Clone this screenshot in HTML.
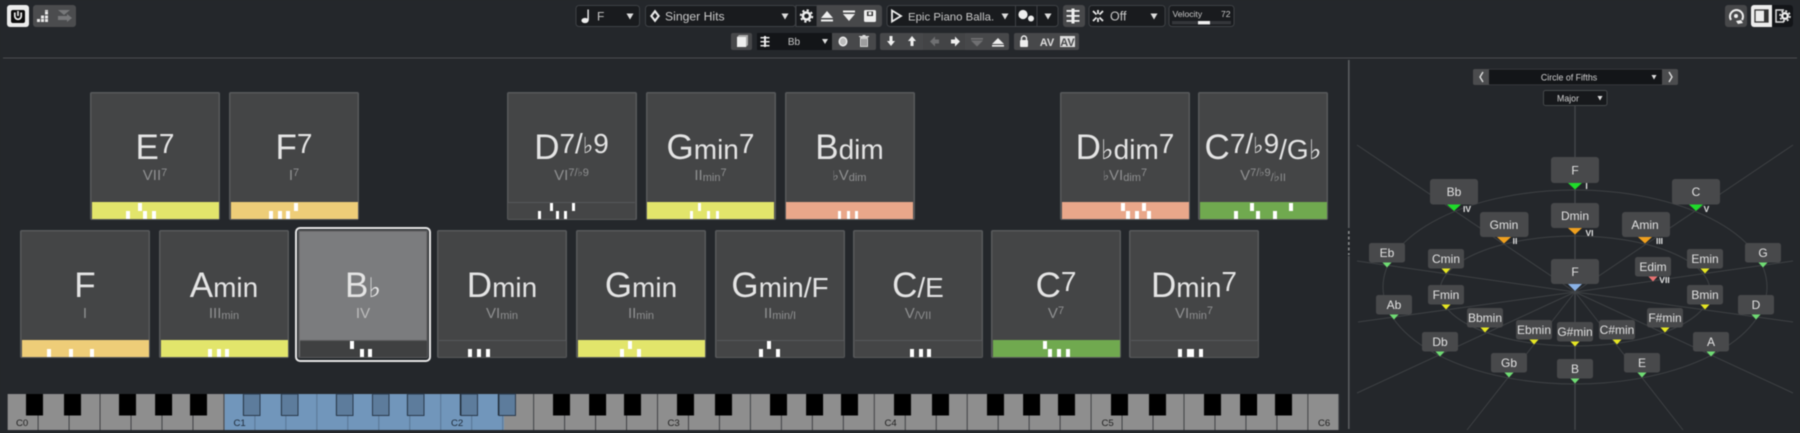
<!DOCTYPE html>
<html><head><meta charset="utf-8"><title>Chord Pads</title>
<style>
html,body{margin:0;padding:0;width:1800px;height:433px;overflow:hidden;background:#24272b;font-family:"Liberation Sans",sans-serif}
#w{position:absolute;left:0;top:0;width:1800px;height:433px;background:#24272b;overflow:hidden;filter:blur(.4px)}
svg.o{position:absolute;left:0;top:0}
svg text{font-family:"Liberation Sans",sans-serif}
.c{position:absolute;width:130px;height:128px;background:#444546;border-radius:2px;box-shadow:inset 0 0 0 1.5px #58595b}
.t{top:92px}.r{top:230px}
.m{position:absolute;left:0;right:0;top:36px;line-height:40px;font-size:35px;text-align:center;color:#e4e4e4;white-space:nowrap}
.m b{font-weight:400;font-size:28px}
.m u{text-decoration:none;font-size:28px;position:relative;top:-6px}
.m s{text-decoration:none;font-size:27px;font-family:"DejaVu Sans",sans-serif}
.m u s{font-size:22px}
.s{position:absolute;left:0;right:0;top:75px;line-height:18px;font-size:15px;text-align:center;color:#8f9091;white-space:nowrap}
.s b{font-weight:400;font-size:11px;position:relative;top:1px}
.s u{text-decoration:none;font-size:11px;position:relative;top:-4px}
.s s{text-decoration:none;font-size:13px;font-family:"DejaVu Sans",sans-serif}
.s u s{font-size:11px}
.b{position:absolute;left:1.5px;right:1.5px;top:110px;height:16.5px;background:#444546;border-top:1px solid #56585a;box-sizing:border-box}
.y{background:#e2e56b;border:0}.g{background:#eecd78;border:0}.p{background:#e9a78a;border:0}.n{background:#70a94f;border:0}
.c i{position:absolute;top:119px;width:3.5px;height:8px;background:#fff}
.c i.u{top:111px}
.sel{position:absolute;left:295px;top:227px;width:136px;height:135px;box-sizing:border-box;border:2px solid #e6e6e6;border-radius:5px}
</style></head><body><div id="w">

<div class="c t" style="left:90px"><div class="m">E<u>7</u></div><div class="s">VII<u>7</u></div><div class="b y"></div><i style="left:36px"></i><i class="u" style="left:48px"></i><i style="left:53px"></i><i style="left:62px"></i></div>
<div class="c t" style="left:229px"><div class="m">F<u>7</u></div><div class="s">I<u>7</u></div><div class="b g"></div><i style="left:40px"></i><i style="left:49px"></i><i style="left:57px"></i><i class="u" style="left:65px"></i></div>
<div class="c t" style="left:506.500px"><div class="m">D<u>7/<s>♭</s>9</u></div><div class="s">VI<u>7/<s>♭</s>9</u></div><div class="b"></div><i style="left:31px"></i><i class="u" style="left:43px"></i><i style="left:49px"></i><i style="left:57px"></i><i class="u" style="left:65px"></i></div>
<div class="c t" style="left:645.500px"><div class="m">G<b>min</b><u>7</u></div><div class="s">II<b>min</b><u>7</u></div><div class="b y"></div><i style="left:44px"></i><i class="u" style="left:52px"></i><i style="left:61px"></i><i style="left:70px"></i></div>
<div class="c t" style="left:784.500px"><div class="m">B<b>dim</b></div><div class="s"><s>♭</s>V<b>dim</b></div><div class="b p"></div><i style="left:53px"></i><i style="left:62px"></i><i style="left:70px"></i></div>
<div class="c t" style="left:1060px"><div class="m">D<s>♭</s><b>dim</b><u>7</u></div><div class="s"><s>♭</s>VI<b>dim</b><u>7</u></div><div class="b p"></div><i class="u" style="left:61px"></i><i style="left:66px"></i><i style="left:75px"></i><i class="u" style="left:82px"></i><i style="left:87px"></i></div>
<div class="c t" style="left:1198px"><div class="m">C<u>7/<s>♭</s>9</u><b>/G</b><s>♭</s></div><div class="s">V<u>7/<s>♭</s>9</u><b>/<s>♭</s>II</b></div><div class="b n"></div><i style="left:36px"></i><i class="u" style="left:52px"></i><i style="left:58px"></i><i style="left:75px"></i><i class="u" style="left:91px"></i></div>

<div class="c r" style="left:20px"><div class="m">F</div><div class="s">I</div><div class="b g"></div><i style="left:27px"></i><i style="left:49px"></i><i style="left:70px"></i></div>
<div class="c r" style="left:159px"><div class="m">A<b>min</b></div><div class="s">III<b>min</b></div><div class="b y"></div><i style="left:49px"></i><i style="left:58px"></i><i style="left:66px"></i></div>
<div class="c r" style="left:298px;background:#7b7c7e"><div class="m">B<s>♭</s></div><div class="s" style="color:#bdbdbd">IV</div><div class="b" style="background:#3f4041;border-top-color:#5a5b5c"></div><i class="u" style="left:52px"></i><i style="left:62px"></i><i style="left:70px"></i></div>
<div class="sel"></div>
<div class="c r" style="left:437px"><div class="m">D<b>min</b></div><div class="s">VI<b>min</b></div><div class="b"></div><i style="left:31px"></i><i style="left:40px"></i><i style="left:49px"></i></div>
<div class="c r" style="left:576px"><div class="m">G<b>min</b></div><div class="s">II<b>min</b></div><div class="b y"></div><i style="left:44px"></i><i class="u" style="left:52px"></i><i style="left:61px"></i></div>
<div class="c r" style="left:715px"><div class="m">G<b>min/F</b></div><div class="s">II<b>min/I</b></div><div class="b"></div><i style="left:44px"></i><i class="u" style="left:52px"></i><i style="left:61px"></i></div>
<div class="c r" style="left:853px"><div class="m">C<b>/E</b></div><div class="s">V<b>/VII</b></div><div class="b"></div><i style="left:57px"></i><i style="left:66px"></i><i style="left:74px"></i></div>
<div class="c r" style="left:991px"><div class="m">C<u>7</u></div><div class="s">V<u>7</u></div><div class="b n"></div><i class="u" style="left:52px"></i><i style="left:57px"></i><i style="left:66px"></i><i style="left:75px"></i></div>
<div class="c r" style="left:1129px"><div class="m">D<b>min</b><u>7</u></div><div class="s">VI<b>min</b><u>7</u></div><div class="b"></div><i style="left:49px"></i><i style="left:58px"></i><i style="left:61px"></i><i style="left:70px"></i></div>

<svg class="o" width="1800" height="433" viewBox="0 0 1800 433" xmlns="http://www.w3.org/2000/svg">
<defs>
<pattern id="wk" x="7.6" y="394" width="30.97" height="36" patternUnits="userSpaceOnUse"><rect width="30.97" height="36" fill="#8e8e8e"/><rect x="30.1" width=".9" height="36" fill="#35363a"/></pattern>
<pattern id="wb" x="7.6" y="394" width="30.97" height="36" patternUnits="userSpaceOnUse"><rect width="30.97" height="36" fill="#7196bb"/><rect x="30.1" width=".9" height="36" fill="#54708e"/></pattern>
<pattern id="bk" x="7.6" y="394" width="217" height="22" patternUnits="userSpaceOnUse"><rect x="18.4" width="17" height="21.5" fill="#000"/><rect x="56.4" width="17" height="21.5" fill="#000"/><rect x="111.4" width="17" height="21.5" fill="#000"/><rect x="147.5" width="17" height="21.5" fill="#000"/><rect x="182.4" width="17" height="21.5" fill="#000"/></pattern>
</defs>

<!-- dividers -->
<rect x="3" y="57.5" width="1794" height="1" fill="#4a4d50"/>
<rect x="1348" y="60" width="1.6" height="168" fill="#5a5d60"/>
<line x1="1348.8" y1="231" x2="1348.8" y2="255" stroke="#8a8c8e" stroke-width="1.6" stroke-dasharray="3 2.5"/>
<rect x="1348" y="256" width="1.6" height="173" fill="#5a5d60"/>

<!-- top-left -->
<rect x="7" y="5" width="22" height="22" rx="3" fill="#ececec"/>
<rect x="11" y="10" width="14" height="13" rx="2" fill="#0b0b0b"/>
<path d="M14.8 12.5v3.6a3.2 3.2 0 0 0 6.4 0v-3.6" fill="none" stroke="#eee" stroke-width="1.7"/><rect x="17.2" y="11" width="1.6" height="5" fill="#eee"/>
<rect x="33" y="5" width="43" height="22" rx="3" fill="#4b4c4e"/>
<g fill="#e8e8e8"><rect x="37" y="19" width="3" height="3"/><rect x="41" y="19" width="3" height="3"/><rect x="45" y="19" width="3" height="3"/><rect x="41" y="15.5" width="3" height="3"/><rect x="45" y="15.5" width="3" height="3"/><rect x="45" y="11.5" width="3" height="3"/><rect x="45" y="10" width="3" height="1.2"/></g>
<path d="M58 10h12l-6 5z M58 16h9v-2l5 4-5 4v-2h-9z" fill="#77787a"/>

<!-- note box -->
<rect x="576" y="5.5" width="63.5" height="21" rx="3" fill="#191b1e" stroke="#3e4145"/>
<ellipse cx="585" cy="20.5" rx="3.6" ry="2.6" fill="#eee"/><rect x="587.4" y="9.5" width="1.4" height="11" fill="#eee"/>
<text x="597" y="20.5" font-size="12" fill="#c9c9c9">F</text>
<path d="M626.5 13.5h7l-3.5 6z" fill="#ddd"/>
<!-- singer hits -->
<rect x="645.5" y="5.5" width="150" height="21" rx="3" fill="#191b1e" stroke="#3e4145"/>
<path d="M655 9.5l5 6.5-5 6.5-5-6.5z" fill="#e8e8e8"/><path d="M655 13l2.4 3-2.4 3-2.4-3z" fill="#191b1e"/>
<text x="665" y="20.5" font-size="12.2" fill="#c9c9c9">Singer Hits</text>
<path d="M781.5 13.5h7l-3.5 6z" fill="#ddd"/>
<rect x="796" y="5.5" width="21" height="21" fill="#191b1e" stroke="#3e4145"/>
<circle cx="806.5" cy="16" r="3.6" fill="none" stroke="#eee" stroke-width="2.6"/><circle cx="806.5" cy="16" r="5.8" fill="none" stroke="#eee" stroke-width="1.8" stroke-dasharray="2.2 2.35"/>
<path d="M817 5h62a3 3 0 0 1 3 3v16a3 3 0 0 1-3 3h-62z" fill="#47484a"/>
<path d="M821 18l6-7 6 7z M821 19.5h12v2h-12z" fill="#eee"/>
<path d="M843 14l6 7 6-7z M843 10.5h12v2h-12z" fill="#eee"/>
<rect x="864" y="10" width="12" height="12" rx="1.5" fill="#eee"/><rect x="867" y="11.5" width="6" height="4.5" fill="#333"/><rect x="868.5" y="12" width="3" height="3" fill="#eee"/>
<!-- epic -->
<rect x="887" y="5.5" width="171" height="21" rx="3" fill="#191b1e" stroke="#3e4145"/>
<line x1="1015.5" y1="5.5" x2="1015.5" y2="26.5" stroke="#3e4145"/><line x1="1037" y1="5.5" x2="1037" y2="26.5" stroke="#3e4145"/>
<path d="M892 10.5l9 5.5-9 5.5z" fill="none" stroke="#eee" stroke-width="1.8"/>
<text x="908" y="20.5" font-size="11.4" fill="#c9c9c9">Epic Piano Balla.</text>
<path d="M1001.5 13.5h7l-3.5 6z" fill="#ddd"/>
<circle cx="1023" cy="14.5" r="4.6" fill="#eee"/><circle cx="1031" cy="18.5" r="3" fill="#eee"/>
<path d="M1044.5 13.5h7l-3.5 6z" fill="#ddd"/>
<rect x="1063" y="5" width="22" height="22" rx="3" fill="#47484a"/>
<g fill="#eee"><rect x="1066.5" y="10" width="13" height="1.8"/><rect x="1066.5" y="15" width="13" height="1.8"/><rect x="1066.5" y="20" width="13" height="1.8"/><rect x="1071.5" y="8.5" width="3" height="15"/></g>
<!-- off -->
<rect x="1089" y="5.5" width="76" height="21" rx="3" fill="#191b1e" stroke="#3e4145"/>
<g stroke="#eee" stroke-width="1.7" fill="none"><path d="M1093 11l3.500 3.500M1103 11l-3.500 3.500M1093 21l3.500-3.500M1103 21l-3.500-3.500"/><path d="M1098 10v4M1098 18v4"/></g>
<text x="1110" y="20.5" font-size="12.5" fill="#c9c9c9">Off</text>
<path d="M1150.5 13.5h7l-3.5 6z" fill="#ddd"/>
<!-- velocity -->
<rect x="1169" y="5.5" width="65" height="21" rx="3" fill="#191b1e" stroke="#3e4145"/>
<text x="1172.5" y="17" font-size="8.6" fill="#c9c9c9">Velocity</text><text x="1230.5" y="17" font-size="8.6" fill="#c9c9c9" text-anchor="end">72</text>
<rect x="1172" y="21" width="59" height="3.4" fill="#34363a"/><rect x="1198" y="21" width="12" height="3.4" fill="#f0f0f0"/>

<!-- row 2 -->
<rect x="731" y="33" width="21" height="17" rx="2" fill="#47484a"/>
<path d="M737 37l2-2h9v10l-2 2" fill="#aaa"/><rect x="737" y="37" width="9" height="10" fill="#eee"/>
<rect x="757" y="33" width="75" height="17" fill="#131518"/>
<g fill="#eee"><rect x="760.5" y="37" width="9" height="1.4"/><rect x="760.5" y="41" width="9" height="1.4"/><rect x="760.5" y="45" width="9" height="1.4"/><rect x="764" y="36" width="2" height="11"/></g>
<text x="794" y="45" font-size="10" fill="#c9c9c9" text-anchor="middle">Bb</text>
<path d="M822 39h6l-3 5z" fill="#ddd"/>
<path d="M832 33h42a2 2 0 0 1 2 2v13a2 2 0 0 1-2 2h-42z" fill="#47484a"/>
<ellipse cx="843" cy="41.5" rx="4.5" ry="5" fill="#eee"/><ellipse cx="843" cy="41.5" rx="3" ry="3.5" fill="#bbb"/>
<path d="M860 37h8v10h-8z" fill="#ccc"/><path d="M859 36h10v1h-10z M862.5 35h3v1h-3z" fill="#ddd"/><path d="M862 39v7M864 39v7M866 39v7" stroke="#47484a" stroke-width=".7"/>
<rect x="880" y="33" width="129" height="17" rx="2" fill="#47484a"/>
<rect x="923" y="33" width="42" height="17" fill="#434446"/>
<g fill="#eee"><path d="M889.5 36h3v5h2.500l-4 5-4-5h2.500z"/><path d="M910.5 46h3v-5h2.500l-4-5-4 5h2.500z"/><path d="M951 39.5h4v-3l5 5-5 5v-3h-4z"/><path d="M992 45h12v1.600h-12zM992 44l6-6 6 6z"/></g>
<g fill="#6f7072"><path d="M939 39.5h-4v-3l-5 5 5 5v-3h4z"/><path d="M971 38h12v1.600h-12zM971 40.500l6 6 6-6z"/></g>
<rect x="1014" y="33" width="65" height="17" rx="2" fill="#47484a"/>
<rect x="1020" y="40" width="8" height="7" rx="1" fill="#eee"/><path d="M1021.5 40v-1.500a2.500 2.500 0 0 1 5 0v1.500" fill="none" stroke="#eee" stroke-width="1.4"/>
<text x="1047" y="46" font-size="11" font-weight="700" fill="#ddd" text-anchor="middle">AV</text>
<rect x="1060" y="36" width="15" height="11" fill="#ddd"/><text x="1067.5" y="46" font-size="11" font-weight="700" fill="#47484a" text-anchor="middle">AV</text>

<!-- top right -->
<rect x="1725" y="5" width="22" height="22" rx="3" fill="#47484a"/>
<path d="M1731 20a6.500 6.500 0 1 1 11 0" fill="none" stroke="#eee" stroke-width="2"/><circle cx="1736" cy="16" r="2" fill="#eee"/><path d="M1736 21l5-1 2 3-5 1z" fill="#eee"/>
<path d="M1754 5h18v22h-18a3 3 0 0 1-3-3V8a3 3 0 0 1 3-3z" fill="#ededed"/>
<rect x="1755" y="10" width="13" height="12" fill="#ededed" stroke="#333" stroke-width="1.3"/><rect x="1764" y="10" width="4" height="12" fill="#333"/>
<path d="M1772 5h18a3 3 0 0 1 3 3v16a3 3 0 0 1-3 3h-18z" fill="#131518"/>
<path d="M1784 10h-8v12h8" fill="none" stroke="#ddd" stroke-width="1.5"/>
<circle cx="1785" cy="16" r="2.800" fill="#131518" stroke="#eee" stroke-width="2.400"/><circle cx="1785" cy="16" r="5" fill="none" stroke="#eee" stroke-width="1.600" stroke-dasharray="2 1.930"/>

<!-- keyboard -->
<rect x="7.6" y="394" width="1331.5" height="36" fill="url(#wk)"/>
<rect x="224.6" y="394" width="279.4" height="36" fill="url(#wb)"/>
<rect x="7.6" y="394" width="1302" height="22" fill="url(#bk)"/>
<g fill="#5d7c9c" stroke="#2a3a4c"><rect x="243.5" y="394" width="16.5" height="21.5"/><rect x="281.5" y="394" width="16.5" height="21.5"/><rect x="336.5" y="394" width="16.5" height="21.5"/><rect x="372.5" y="394" width="16.5" height="21.5"/><rect x="407.5" y="394" width="16.5" height="21.5"/><rect x="461" y="394" width="16.5" height="21.5"/><rect x="499" y="394" width="16.5" height="21.5"/></g>
<g font-size="9.6" fill="#222"><text x="16" y="426">C0</text><text x="233.5" y="426" fill="#1d2a38">C1</text><text x="451" y="426" fill="#1d2a38">C2</text><text x="667.5" y="426">C3</text><text x="884.5" y="426">C4</text><text x="1101.5" y="426">C5</text><text x="1318" y="426">C6</text></g>

<!-- panel lines -->
<g fill="none" stroke="#3e4144" stroke-width="1">
<ellipse cx="1575" cy="287" rx="192" ry="97"/>
<ellipse cx="1575" cy="291" rx="135" ry="55"/>
<path d="M1575 292L1357 145M1575 292L1793 145M1575 292L1357 261M1575 292L1793 261M1575 292L1358 322M1575 292L1793 322M1575 292L1357 393M1575 292L1793 393M1575 292L1467 430M1575 292L1683 430"/>
</g>
<line x1="1575" y1="106" x2="1575" y2="430" stroke="#45484b" stroke-width="1.3"/>

<!-- panel selectors -->
<rect x="1473" y="69" width="205" height="16" rx="2" fill="#4b4c4e"/>
<rect x="1489" y="69.500" width="173" height="15" fill="#131518"/>
<path d="M1483 72l-3 5 3 5M1669 72l3 5-3 5" fill="none" stroke="#ddd" stroke-width="1.4"/>
<text x="1569" y="80.500" font-size="8.800" fill="#d0d0d0" text-anchor="middle">Circle of Fifths</text>
<path d="M1651.500 75h5l-2.500 4.500z" fill="#ddd"/>
<rect x="1543.500" y="90.500" width="63.500" height="15" rx="2" fill="#17191c" stroke="#45484b"/>
<text x="1568" y="101.500" font-size="8.800" fill="#d0d0d0" text-anchor="middle">Major</text>
<path d="M1597.500 96h5l-2.500 4.500z" fill="#ddd"/>

<!-- chord boxes -->
<g fill="#48494b">
<rect x="1551" y="157" width="48" height="26" rx="3"/><rect x="1430" y="179" width="48" height="25.500" rx="3"/><rect x="1672" y="179" width="48" height="25.500" rx="3"/>
<rect x="1480" y="212" width="48.500" height="25" rx="3"/><rect x="1551" y="203" width="48" height="25" rx="3"/><rect x="1622" y="212" width="48" height="25" rx="3"/><rect x="1551" y="259" width="48" height="25" rx="3"/>
<rect x="1369" y="243" width="36" height="19.500" rx="2.500"/><rect x="1745" y="243" width="36" height="19.500" rx="2.500"/><rect x="1428" y="249" width="36" height="19.500" rx="2.500"/><rect x="1687" y="249" width="36" height="19.500" rx="2.500"/><rect x="1635" y="257" width="36" height="19.500" rx="2.500"/>
<rect x="1376" y="295" width="36" height="19.500" rx="2.500"/><rect x="1738" y="295" width="36" height="19.500" rx="2.500"/><rect x="1428" y="285" width="36" height="19.500" rx="2.500"/><rect x="1687" y="285" width="36" height="19.500" rx="2.500"/>
<rect x="1467" y="308" width="36" height="19.500" rx="2.500"/><rect x="1647" y="308" width="36" height="19.500" rx="2.500"/><rect x="1516" y="320" width="36" height="19.500" rx="2.500"/><rect x="1599" y="320" width="36" height="19.500" rx="2.500"/><rect x="1557" y="322" width="36" height="19.500" rx="2.500"/>
<rect x="1422" y="332" width="36" height="19.500" rx="2.500"/><rect x="1693" y="332" width="36" height="19.500" rx="2.500"/><rect x="1491" y="353" width="36" height="19.500" rx="2.500"/><rect x="1624" y="353" width="36" height="19.500" rx="2.500"/><rect x="1557" y="359" width="36" height="19.500" rx="2.500"/>
</g>
<g fill="#e2e2e2" font-size="12" text-anchor="middle">
<text x="1575" y="174.500">F</text><text x="1454" y="196">Bb</text><text x="1696" y="196">C</text><text x="1504" y="229">Gmin</text><text x="1575" y="220">Dmin</text><text x="1645" y="229">Amin</text><text x="1575" y="276">F</text>
<text x="1387" y="257">Eb</text><text x="1763" y="257">G</text><text x="1446" y="263">Cmin</text><text x="1705" y="263">Emin</text><text x="1653" y="271">Edim</text>
<text x="1394" y="309">Ab</text><text x="1756" y="309">D</text><text x="1446" y="299">Fmin</text><text x="1705" y="299">Bmin</text>
<text x="1485" y="322">Bbmin</text><text x="1665" y="322">F#min</text><text x="1534" y="334">Ebmin</text><text x="1617" y="334">C#min</text><text x="1575" y="336">G#min</text>
<text x="1440" y="346">Db</text><text x="1711" y="346">A</text><text x="1509" y="367">Gb</text><text x="1642" y="367">E</text><text x="1575" y="373">B</text>
</g>
<!-- triangles -->
<g fill="#1fdc2a"><path d="M1568 183h14l-7 6.500z"/><path d="M1447 204.500h14l-7 6.500z"/><path d="M1689 204.500h14l-7 6.500z"/></g>
<g fill="#f0a01e"><path d="M1497 237h14l-7 6.500z"/><path d="M1568 228h14l-7 6.500z"/><path d="M1638 237h14l-7 6.500z"/></g>
<path d="M1568 284h14l-7 7z" fill="#8ab2e6"/>
<g fill="#6fdc73"><path d="M1382.500 262.500h9l-4.500 5z"/><path d="M1758.500 262.500h9l-4.500 5z"/><path d="M1389.500 314.500h9l-4.500 5z"/><path d="M1751.500 314.500h9l-4.500 5z"/><path d="M1435.500 351.500h9l-4.500 5z"/><path d="M1706.500 351.500h9l-4.500 5z"/><path d="M1504.500 372.500h9l-4.500 5z"/><path d="M1637.500 372.500h9l-4.500 5z"/><path d="M1570.500 378.500h9l-4.500 5z"/></g>
<g fill="#e6e622"><path d="M1441.500 268.500h9l-4.500 5z"/><path d="M1700.500 268.500h9l-4.500 5z"/><path d="M1441.500 304.500h9l-4.500 5z"/><path d="M1700.500 304.500h9l-4.500 5z"/><path d="M1480.500 327.500h9l-4.500 5z"/><path d="M1660.500 327.500h9l-4.500 5z"/><path d="M1529.500 339.500h9l-4.500 5z"/><path d="M1612.500 339.500h9l-4.500 5z"/><path d="M1570.500 341.500h9l-4.500 5z"/></g>
<path d="M1648.500 276.500h9l-4.500 5z" fill="#e87272"/>
<g fill="#e6e6e6" font-size="8.500" font-weight="700" text-anchor="middle">
<text x="1586.500" y="189">I</text><text x="1467" y="212">IV</text><text x="1706.500" y="212">V</text><text x="1589.500" y="236">VI</text><text x="1515" y="244">II</text><text x="1659.500" y="244">III</text><text x="1664.500" y="283">VII</text>
</g>
</svg>
</div></body></html>
